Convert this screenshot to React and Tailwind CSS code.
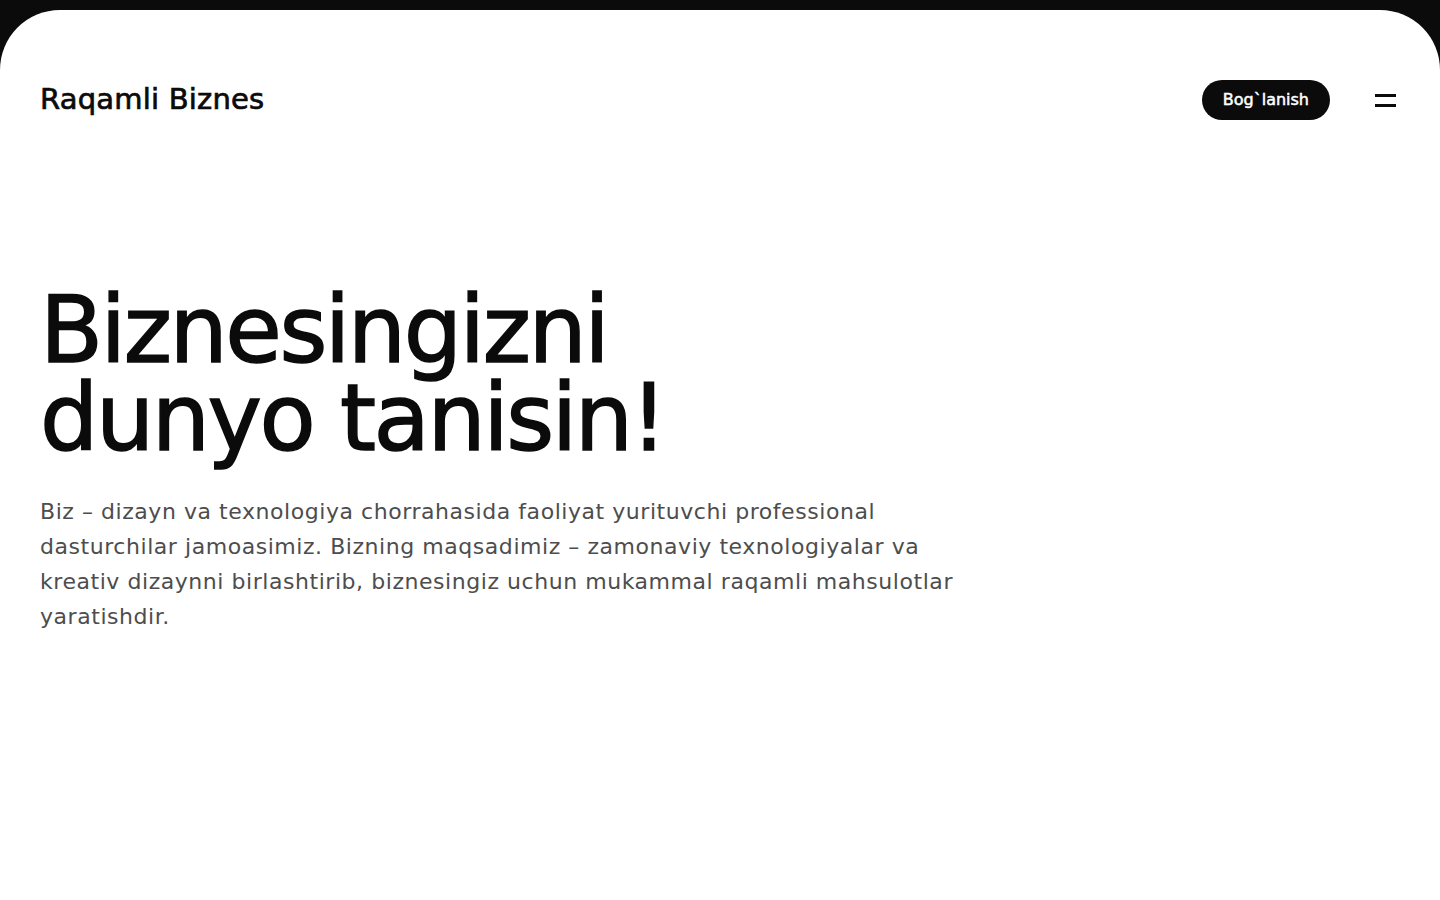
import React from 'react'

const font = { fontFamily: '"DejaVu Sans", "Liberation Sans", sans-serif' }

function App() {
  return (
    <div className="min-h-screen bg-[#0b0b0b] pt-[10px]" style={font}>
      <div className="min-h-[890px] bg-white rounded-t-[60px] px-10 pt-[70px]">
        <header className="flex items-center justify-between h-10">
          <a href="#" className="text-[29px] tracking-[0.2px] text-[#0b0b0b] [-webkit-text-stroke:0.7px_#0b0b0b]">
            Raqamli Biznes
          </a>
          <div className="flex items-center gap-[45px] pr-1">
            <button className="h-10 px-[21px] rounded-full bg-[#0b0b0b] text-white text-[16px] [-webkit-text-stroke:0.5px_#ffffff]">
              Bog`lanish
            </button>
            <button className="flex flex-col gap-[7px] w-[21px]">
              <span className="block h-[3px] w-full bg-[#0b0b0b]"></span>
              <span className="block h-[3px] w-full bg-[#0b0b0b]"></span>
            </button>
          </div>
        </header>

        <section className="pt-[167px]">
          <h1 className="text-[92px] leading-[88px] tracking-[-2.5px] text-[#0b0b0b] [-webkit-text-stroke:1.5px_#0b0b0b]">
            Biznesingizni
            <br />
            dunyo tanisin!
          </h1>
          <p className="mt-[31px] text-[22px] leading-[35px] tracking-[0.55px] text-[#4d4d4d]">
            Biz – dizayn va texnologiya chorrahasida faoliyat yurituvchi professional
            <br />
            dasturchilar jamoasimiz. Bizning maqsadimiz – zamonaviy texnologiyalar va
            <br />
            kreativ dizaynni birlashtirib, biznesingiz uchun mukammal raqamli mahsulotlar
            <br />
            yaratishdir.
          </p>
        </section>
      </div>
    </div>
  )
}

export default App
